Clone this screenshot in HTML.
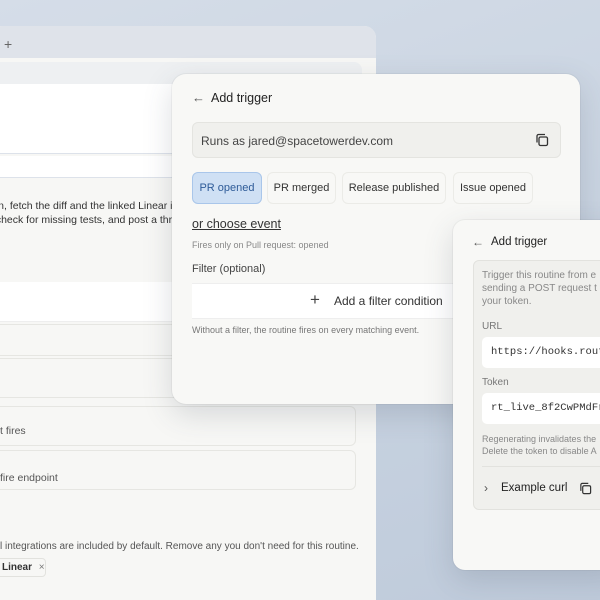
<!DOCTYPE html>
<html style="width:600px;height:600px;overflow:hidden"><head><style>
*{margin:0;padding:0;box-sizing:border-box}
body{width:600px;height:600px;overflow:hidden;position:relative;font-family:"Liberation Sans",sans-serif;background:linear-gradient(160deg,#d5dde8 0%,#c7d2e0 60%,#bfcbdb 100%);color:#2a2a28}
.abs{position:absolute}
.t{position:absolute;white-space:nowrap}
.win{left:-10px;top:26px;width:386px;height:574px;background:#f7f7f5;border-radius:12px 12px 0 0;overflow:hidden}
.bar{left:0;top:0;width:386px;height:32px;background:#dfe3ea}
.fld{position:absolute;border:1px solid #e6e6e2;border-radius:6px;background:#f7f7f5}
.d1{left:172px;top:74px;width:408px;height:330px;background:#f8f8f6;border-radius:14px;box-shadow:0 10px 30px rgba(60,70,90,.18),0 0 0 1px rgba(0,0,0,.04)}
.d2{left:453px;top:220px;width:170px;height:350px;background:#f8f8f6;border-radius:12px;box-shadow:0 10px 30px rgba(60,70,90,.18),0 0 0 1px rgba(0,0,0,.04)}
.chip{position:absolute;top:98px;height:32px;border:1px solid #ebebe7;border-radius:6px;background:#f8f8f6;font-size:11px;line-height:30px;text-align:center;color:#333}
.mono{font-family:"Liberation Mono",monospace}
</style></head><body>
<div class="abs win">
 <div class="abs bar"></div>
 <div class="t" style="left:14px;top:10px;font-size:14px;color:#666">+</div>
 <div class="abs" style="left:0;top:36px;width:372px;height:22px;background:#eef0f2;border-radius:0 8px 0 0"></div>
 <div class="abs" style="left:0;top:58px;width:386px;height:70px;background:#fff;border-bottom:1px solid #dde2ea"></div>
 <div class="abs" style="left:0;top:130px;width:386px;height:22px;background:#fff;border-bottom:1px solid #dde2ea"></div>
 <div class="t" style="left:0;top:173px;font-size:10.5px;line-height:14px;color:#333">ain, fetch the diff and the linked Linear is<br>, check for missing tests, and post a thre</div>
 <div class="abs" style="left:0;top:256px;width:366px;height:40px;background:#fff;border-bottom:1px solid #eee"></div>
 <div class="fld" style="left:-4px;top:298px;width:370px;height:32px"></div>
 <div class="fld" style="left:-4px;top:332px;width:370px;height:40px"></div>
 <div class="fld" style="left:-4px;top:380px;width:370px;height:40px"></div>
 <div class="t" style="left:10px;top:399px;font-size:10.5px;color:#555">t fires</div>
 <div class="fld" style="left:-4px;top:424px;width:370px;height:40px"></div>
 <div class="t" style="left:10px;top:446px;font-size:10.5px;color:#555">fire endpoint</div>
 <div class="t" style="left:10px;top:515px;font-size:10px;color:#555">l integrations are included by default. Remove any you don't need for this routine.</div>
 <div class="abs" style="left:0;top:532px;width:56px;height:19px;border:1px solid #e2e2de;border-radius:4px;background:#f7f7f5"></div>
 <div class="t" style="left:12px;top:536px;font-size:10px;font-weight:bold;color:#333">Linear <span style="font-weight:normal;color:#777;margin-left:4px">×</span></div>
</div>

<div class="abs d1">
 <div class="t" style="left:20px;top:16px;font-size:13px;color:#555">←</div>
 <div class="t" style="left:39px;top:17px;font-size:12.5px;color:#222">Add trigger</div>
 <div class="abs" style="left:20px;top:48px;width:369px;height:36px;background:#f0f0ed;border:1px solid #e4e4e0;border-radius:6px"></div>
 <div class="t" style="left:29px;top:60px;font-size:12px;color:#444">Runs as jared@spacetowerdev.com</div>
 <svg class="abs" style="left:363px;top:59px" width="14" height="14" viewBox="0 0 14 14" fill="none" stroke="#333" stroke-width="1.3"><rect x="4" y="4" width="8.5" height="8.5" rx="1.5"/><path d="M2 9.5V3a1.5 1.5 0 0 1 1.5-1.5H10"/></svg>
 <div class="chip" style="left:20px;width:70px;background:#cfe0f4;border-color:#a9c6ea;color:#2e5b98">PR opened</div>
 <div class="chip" style="left:95px;width:69px">PR merged</div>
 <div class="chip" style="left:170px;width:104px">Release published</div>
 <div class="chip" style="left:281px;width:80px">Issue opened</div>
 <div class="t" style="left:20px;top:143px;font-size:12.5px;text-decoration:underline;color:#333">or choose event</div>
 <div class="t" style="left:20px;top:166px;font-size:9px;color:#888">Fires only on Pull request: opened</div>
 <div class="t" style="left:20px;top:189px;font-size:11px;color:#444">Filter (optional)</div>
 <div class="abs" style="left:20px;top:209px;width:388px;height:36px;background:#fff;border-top:1px solid #eee;border-bottom:1px solid #eee"></div>
 <div class="t" style="left:138px;top:216px;font-size:17px;color:#444;font-weight:300">+</div>
 <div class="t" style="left:162px;top:220px;font-size:12px;color:#333">Add a filter condition</div>
 <div class="t" style="left:20px;top:251px;font-size:9px;color:#777">Without a filter, the routine fires on every matching event.</div>
</div>

<div class="abs d2">
 <div class="t" style="left:19px;top:15px;font-size:12px;color:#555">←</div>
 <div class="t" style="left:38px;top:16px;font-size:11.5px;color:#222">Add trigger</div>
 <div class="abs" style="left:20px;top:40px;width:160px;height:250px;background:#f0f0ed;border:1px solid #e2e2de;border-radius:6px"></div>
 <div class="t" style="left:29px;top:49px;font-size:10px;line-height:13px;color:#888">Trigger this routine from e<br>sending a POST request t<br>your token.</div>
 <div class="t" style="left:29px;top:101px;font-size:10px;color:#777">URL</div>
 <div class="abs" style="left:29px;top:117px;width:150px;height:31px;background:#fff;border-radius:5px"></div>
 <div class="t mono" style="left:38px;top:126px;font-size:10.5px;color:#333">https://hooks.rout</div>
 <div class="t" style="left:29px;top:157px;font-size:10px;color:#777">Token</div>
 <div class="abs" style="left:29px;top:173px;width:150px;height:31px;background:#fff;border-radius:5px"></div>
 <div class="t mono" style="left:38px;top:182px;font-size:10.5px;color:#333">rt_live_8f2CwPMdFr.</div>
 <div class="t" style="left:29px;top:213px;font-size:9px;line-height:12px;color:#888">Regenerating invalidates the<br>Delete the token to disable A</div>
 <div class="abs" style="left:29px;top:246px;width:150px;height:1px;background:#e2e2de"></div>
 <div class="t" style="left:31px;top:261px;font-size:12px;color:#555">›</div>
 <div class="t" style="left:48px;top:262px;font-size:11.5px;color:#222">Example curl</div>
 <svg class="abs" style="left:126px;top:262px" width="13" height="13" viewBox="0 0 14 14" fill="none" stroke="#333" stroke-width="1.3"><rect x="4" y="4" width="8.5" height="8.5" rx="1.5"/><path d="M2 9.5V3a1.5 1.5 0 0 1 1.5-1.5H10"/></svg>
</div>
</body></html>
